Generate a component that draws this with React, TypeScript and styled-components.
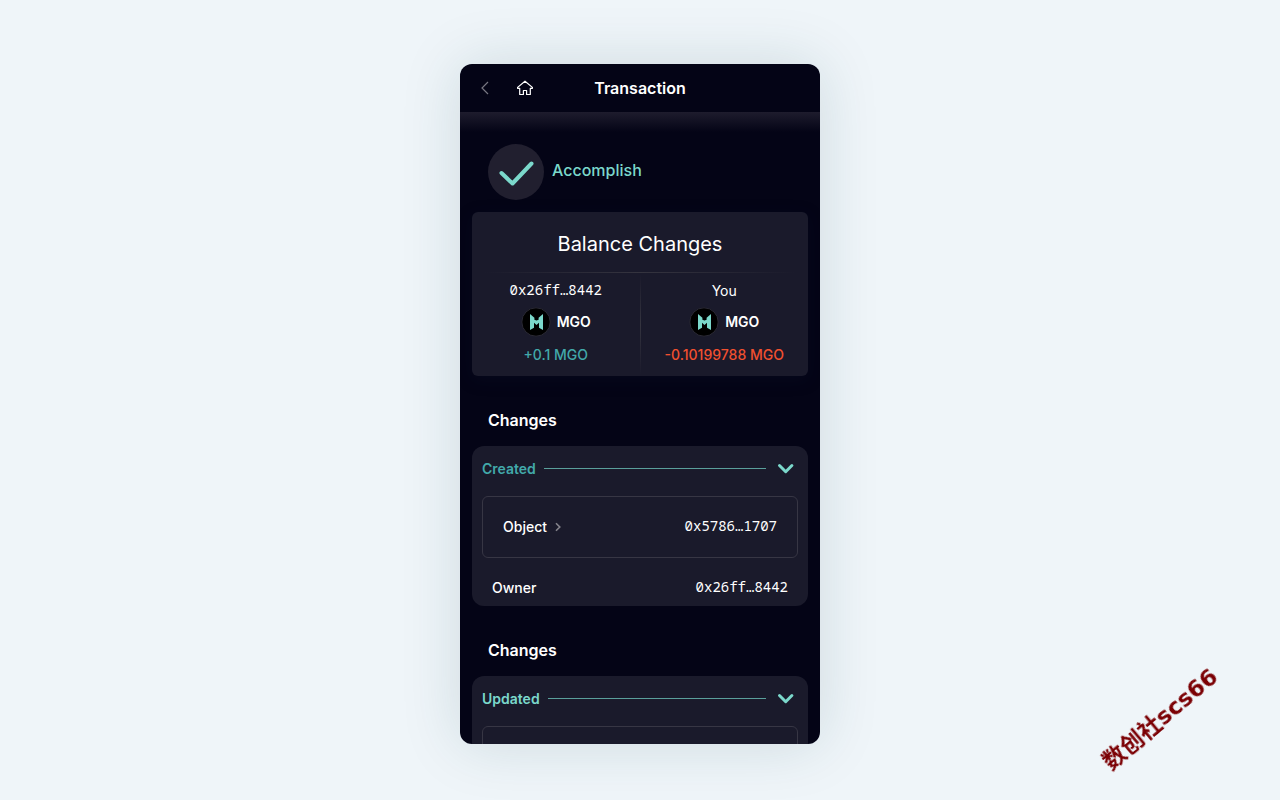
import React from "react";
import styled, { createGlobalStyle } from "styled-components";

const GlobalStyle = createGlobalStyle`
  * { box-sizing: border-box; }
  body {
    margin: 0;
    background: #eff5f9;
    color: #fff;
    font-family: Inter, "Liberation Sans", sans-serif;
    font-size: 14px;
    line-height: 20px;
  }
  h1, h2, p { margin: 0; }
  button { font: inherit; color: inherit; background: none; border: 0; padding: 0; cursor: pointer; }
`;

const Page = styled.main`
  height: 100vh;
  padding: 64px 16px 56px;
  display: flex;
  justify-content: center;
  overflow: hidden;
`;

const Wallet = styled.section`
  width: 100%;
  max-width: 360px;
  border-radius: 12px;
  overflow: hidden;
  background: #040416;
  box-shadow: 0 0 60px rgba(22, 69, 75, 0.15);
  display: flex;
  flex-direction: column;
`;

const Header = styled.header`
  flex: none;
  height: 48px;
  padding: 0 16px;
  display: grid;
  grid-template-columns: 1fr auto 1fr;
  align-items: center;
`;

const HeaderActions = styled.nav`
  display: flex;
  gap: 24px;
`;

const IconButton = styled.button`
  display: flex;
  align-items: center;
  justify-content: center;
  min-width: 16px;
  height: 20px;
`;

const Title = styled.h1`
  font-size: 16px;
  line-height: 24px;
  font-weight: 600;
`;

const Content = styled.div`
  flex: 1;
  min-height: 0;
  overflow: hidden;
  padding: 32px 12px 0;
  background: linear-gradient(#1e1c2d, #040416) top / 100% 20px no-repeat;
`;

const Status = styled.div`
  display: flex;
  align-items: center;
  gap: 8px;
  padding: 0 16px;
  margin-bottom: 12px;
`;

const StatusBadge = styled.span`
  width: 56px;
  height: 56px;
  border-radius: 50%;
  background: #211f2f;
  display: flex;
`;

const StatusText = styled.p`
  color: #7bd8cb;
  font-size: 16px;
  line-height: 24px;
  font-weight: 500;
  padding-bottom: 4px;
`;

const BalanceCard = styled.section`
  border-radius: 6px;
  background: #1a1a2b;
  box-shadow: 0 4px 16px rgba(10, 18, 42, 0.3);
`;

const BalanceTitle = styled.h2`
  padding: 18px 0 14px;
  font-size: 20px;
  line-height: 28px;
  font-weight: 400;
  text-align: center;
`;

const Divider = styled.div<{ $vertical?: boolean }>`
  ${(p) => (p.$vertical ? "width: 1px;" : "height: 1px; margin: 0 12px;")}
  background: linear-gradient(
    ${(p) => (p.$vertical ? "180deg" : "90deg")},
    transparent, #35343f, transparent
  );
`;

const BalanceColumns = styled.div`
  display: grid;
  grid-template-columns: 1fr 1px 1fr;
`;

const BalanceColumn = styled.div`
  display: flex;
  flex-direction: column;
  align-items: center;
  padding: 8px 0 11px;
`;

const Address = styled.span`
  font-family: "Noto Sans Mono", "DejaVu Sans Mono", monospace;
  font-weight: 400;
  line-height: 18px;
  padding-bottom: 2px;
`;

const Token = styled.div`
  display: flex;
  align-items: center;
  gap: 6px;
  margin: 6px 0 8px;
  font-weight: 600;
`;

const Amount = styled.p<{ $negative?: boolean }>`
  font-weight: 500;
  color: ${(p) => (p.$negative ? "#f1502f" : "#42a9aa")};
`;

const SectionTitle = styled.h2`
  padding: 32px 16px 14px;
  font-size: 16px;
  line-height: 24px;
  font-weight: 600;
`;

const ChangeCard = styled.section`
  border-radius: 12px;
  background: #1a1a2b;
  padding: 12px 10px 8px;
`;

const GroupToggle = styled.button<{ $updated?: boolean }>`
  width: 100%;
  display: flex;
  align-items: center;
  gap: 8px;
  padding-right: 3px;
  height: 21px;
  font-weight: 600;
  color: ${(p) => (p.$updated ? "#7bd8cb" : "#42a9aa")};
`;

const Rule = styled.span`
  flex: 1;
  height: 1px;
  margin-right: 3px;
  background: #5a9f9b;
`;

const ObjectBox = styled.div`
  margin-top: 17px;
  height: 62px;
  padding: 0 20px;
  border: 1px solid #373644;
  border-radius: 6px;
  display: flex;
  align-items: center;
  justify-content: space-between;
`;

const ObjectLabel = styled.button`
  display: flex;
  align-items: center;
  gap: 8px;
  font-weight: 500;
`;

const OwnerRow = styled.div`
  display: flex;
  justify-content: space-between;
  padding: 20px 10px 0;
  font-weight: 500;
`;

const Watermark = styled.div`
  position: fixed;
  right: 49px;
  bottom: 65px;
  transform: rotate(-40deg);
  color: #7b0004;
  font-family: "DejaVu Sans", "Noto Sans CJK SC", sans-serif;
  font-size: 23px;
  line-height: 32px;
  font-weight: 700;
  white-space: nowrap;
`;

const MgoLogo = () => (
  <svg width="30" height="30" viewBox="0 0 30 30" aria-hidden="true">
    <circle cx="15" cy="15" r="14.2" fill="#000" stroke="#2a2934" />
    <path
      fill="#7bd8cb"
      d="M9 7 L13.4 10.8 V12.8 L15.5 13.6 L17.6 12.8 V10.8 L22 7 V23 L18 20.8 V15.8 L15.5 18 L13 15.8 V20.8 L9 23 Z"
    />
  </svg>
);

const Chevron = () => (
  <svg width="18" height="12" viewBox="0 0 18 12" fill="none" stroke="#7bd8cb" strokeWidth="3" strokeLinecap="round" strokeLinejoin="round" aria-hidden="true">
    <path d="M2.5 2.5 L8.7 8.7 L14.9 2.5" />
  </svg>
);

function Balance({ owner, amount, negative }: { owner: React.ReactNode; amount: string; negative?: boolean }) {
  return (
    <BalanceColumn>
      {owner}
      <Token>
        <MgoLogo />
        MGO
      </Token>
      <Amount $negative={negative}>{amount}</Amount>
    </BalanceColumn>
  );
}

function ChangeGroup({ label, updated, object, owner }: { label: string; updated?: boolean; object?: string; owner?: string }) {
  return (
    <>
      <SectionTitle>Changes</SectionTitle>
      <ChangeCard>
        <GroupToggle type="button" $updated={updated} aria-expanded="true">
          {label}
          <Rule />
          <Chevron />
        </GroupToggle>
        <ObjectBox>
          {object && (
            <>
              <ObjectLabel type="button">
                Object
                <svg width="6" height="10" viewBox="0 0 6 10" fill="none" stroke="#85848c" strokeWidth="1.6" aria-hidden="true">
                  <path d="M1 1.2 L4.8 5 L1 8.8" />
                </svg>
              </ObjectLabel>
              <Address>{object}</Address>
            </>
          )}
        </ObjectBox>
        {owner && (
          <OwnerRow>
            Owner
            <Address>{owner}</Address>
          </OwnerRow>
        )}
      </ChangeCard>
    </>
  );
}

export default function App() {
  return (
    <>
      <GlobalStyle />
      <Page>
        <Wallet>
          <Header>
            <HeaderActions>
              <IconButton type="button" aria-label="Back">
                <svg width="16" height="16" viewBox="0 0 16 16" fill="none" stroke="#777681" strokeWidth="1.2">
                  <path d="M12 2 L6 8 L12 14" />
                </svg>
              </IconButton>
              <IconButton type="button" aria-label="Home">
                <svg width="18" height="16" viewBox="0 0 18 16" fill="none" stroke="#fff" strokeWidth="1.2" strokeLinejoin="round">
                  <path d="M9 1.2 L1.6 7.4 V8.3 H3.7 V14.5 H7.4 V10.5 H10.6 V14.5 H14.3 V8.3 H16.4 V7.4 Z" />
                </svg>
              </IconButton>
            </HeaderActions>
            <Title>Transaction</Title>
          </Header>
          <Content>
            <Status>
              <StatusBadge>
                <svg width="56" height="56" viewBox="0 0 56 56" fill="none" stroke="#7bd8cb" strokeWidth="4" strokeLinecap="round" strokeLinejoin="round" aria-hidden="true">
                  <path d="M13.5 29 L24.5 39.5 L43.5 19.5" />
                </svg>
              </StatusBadge>
              <StatusText>Accomplish</StatusText>
            </Status>
            <BalanceCard>
              <BalanceTitle>Balance Changes</BalanceTitle>
              <Divider />
              <BalanceColumns>
                <Balance owner={<Address>0x26ff…8442</Address>} amount="+0.1 MGO" />
                <Divider $vertical />
                <Balance owner={<span>You</span>} amount="-0.10199788 MGO" negative />
              </BalanceColumns>
            </BalanceCard>
            <ChangeGroup label="Created" object="0x5786…1707" owner="0x26ff…8442" />
            <ChangeGroup label="Updated" updated />
          </Content>
        </Wallet>
      </Page>
      <Watermark>数创社scs66</Watermark>
    </>
  );
}
